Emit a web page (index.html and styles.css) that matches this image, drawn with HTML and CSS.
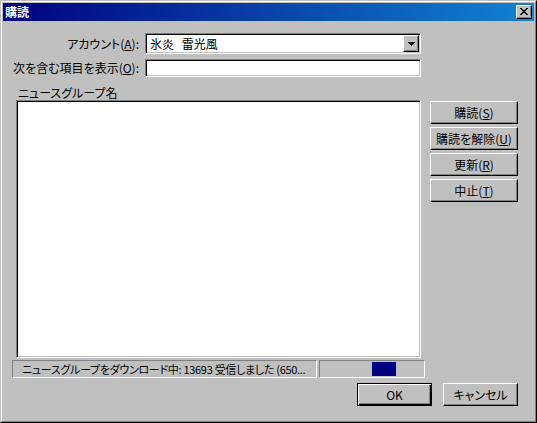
FILE: index.html
```html
<!DOCTYPE html>
<html lang="ja">
<head>
<meta charset="utf-8">
<title>購読</title>
<link rel="stylesheet" href="styles.css">
</head>
<body>
<div class="window">
  <div class="frame">
    <div class="titlebar">
      <span class="title">購読</span>
      <span class="close">
        <svg width="8" height="7" viewBox="0 0 8 7" shape-rendering="crispEdges">
          <path fill="#000" d="M0 0h2v1H0zM6 0h2v1H6zM1 1h2v1H1zM5 1h2v1H5zM2 2h4v1H2zM3 3h2v1H3zM2 4h4v1H2zM1 5h2v1H1zM5 5h2v1H5zM0 6h2v1H0zM6 6h2v1H6z"/>
        </svg>
      </span>
    </div>
    <div class="content">
      <div class="form">
        <span class="lbl">アカウント(<u>A</u>):</span>
        <div class="field combo">
          <span class="combo-text">氷炎 雷光風</span>
          <span class="drop">
            <svg width="7" height="4" viewBox="0 0 7 4" shape-rendering="crispEdges">
              <path fill="#000" d="M0 0h7v1H0zM1 1h5v1H1zM2 2h3v1H2zM3 3h1v1H3z"/>
            </svg>
          </span>
        </div>
        <span class="lbl">次を含む項目を表示(<u>O</u>):</span>
        <div class="field edit"></div>
      </div>
      <div class="list-label">ニュースグループ名</div>
      <div class="main">
        <div class="field listbox"></div>
        <div class="side">
          <button class="btn side-btn">購読(<u>S</u>)</button>
          <button class="btn side-btn">購読を解除(<u>U</u>)</button>
          <button class="btn side-btn">更新(<u>R</u>)</button>
          <button class="btn side-btn">中止(<u>T</u>)</button>
        </div>
      </div>
      <div class="status">
        <div class="panel p1">ニュースグループをダウンロード中: 13693 受信しました (650...</div>
        <div class="panel p2"><div class="bar"></div></div>
      </div>
      <div class="actions">
        <button class="btn default">OK</button>
        <button class="btn">キャンセル</button>
      </div>
    </div>
  </div>
</div>
</body>
</html>
```
FILE: styles.css
```css
html, body {
  margin: 0;
  padding: 0;
  background: #c0c0c0;
}
body {
  font-family: "Noto Sans CJK JP", "Noto Sans", sans-serif;
  font-size: 12px;
  line-height: 14px;
  color: #000;
  font-feature-settings: "palt";
}
.window {
  width: 537px;
  height: 423px;
  box-sizing: border-box;
  border: 1px solid;
  border-color: #c0c0c0 #000 #000 #c0c0c0;
  background: #c0c0c0;
}
.frame {
  height: 100%;
  box-sizing: border-box;
  border: 1px solid;
  border-color: #fff #808080 #808080 #fff;
  padding: 1px;
  display: flex;
  flex-direction: column;
}
.titlebar {
  height: 18px;
  flex: none;
  background: linear-gradient(to right, #000080, #1084d0);
  display: flex;
  align-items: center;
  justify-content: space-between;
  padding: 0 2px 0 2px;
  color: #fff;
  font-weight: bold;
}
.title {
  line-height: 14px;
}
.close {
  width: 16px;
  height: 14px;
  box-sizing: border-box;
  border: 1px solid;
  border-color: #fff #000 #000 #fff;
  box-shadow: inset -1px -1px #808080;
  background: #c0c0c0;
  display: flex;
  align-items: center;
  justify-content: center;
  padding: 0 1px 1px 0;
}
.close svg { display: block; }
.content {
  flex: 1;
}
.form {
  display: grid;
  grid-template-columns: 136px 276px;
  column-gap: 6px;
  row-gap: 5px;
  margin-top: 12px;
  align-items: center;
}
.lbl {
  text-align: right;
  white-space: nowrap;
}
.field {
  box-sizing: border-box;
  border: 1px solid;
  border-color: #808080 #fff #fff #808080;
  box-shadow: inset 1px 1px #000, inset -1px -1px #c0c0c0;
  background: #fff;
}
.combo {
  height: 21px;
  display: flex;
  align-items: center;
  justify-content: space-between;
  padding: 1px 1px 1px 4px;
}
.combo-text {
  white-space: pre;
  font-feature-settings: normal;
  word-spacing: 5px;
}
.drop {
  width: 16px;
  height: 17px;
  box-sizing: border-box;
  border: 1px solid;
  border-color: #fff #000 #000 #fff;
  box-shadow: inset -1px -1px #808080;
  background: #c0c0c0;
  display: flex;
  align-items: center;
  justify-content: center;
  padding-top: 1px;
}
.drop svg { display: block; }
.edit {
  height: 18px;
}
.list-label {
  margin-top: 9px;
  padding-left: 15px;
}
.main {
  display: flex;
  margin-left: 13px;
}
.listbox {
  width: 405px;
  height: 258px;
}
.side {
  margin-left: 9px;
  padding-top: 1px;
  display: flex;
  flex-direction: column;
  gap: 3px;
}
.btn {
  width: 75px;
  height: 23px;
  box-sizing: border-box;
  border: 1px solid;
  border-color: #fff #000 #000 #fff;
  box-shadow: inset -1px -1px #808080;
  background: #c0c0c0;
  font: inherit;
  color: #000;
  padding: 0;
  margin: 0;
  white-space: nowrap;
}
.side-btn {
  width: 88px;
}
.btn.default {
  border-color: #000;
  box-shadow: inset 1px 1px #fff, inset -1px -1px #000, inset -2px -2px #808080;
}
.status {
  display: flex;
  gap: 2px;
  margin-top: 2px;
  margin-left: 9px;
  height: 18px;
}
.panel {
  box-sizing: border-box;
  height: 18px;
  border: 1px solid;
  border-color: #808080 #fff #fff #808080;
}
.p1 {
  width: 305px;
  padding-left: 9px;
  font-size: 11px;
  line-height: 16px;
  white-space: nowrap;
  overflow: hidden;
  letter-spacing: -0.3px;
}
.p2 {
  width: 106px;
  padding: 1px;
}
.bar {
  margin-left: 51px;
  width: 24px;
  height: 14px;
  background: #000080;
}
.actions {
  display: flex;
  justify-content: flex-end;
  gap: 11px;
  margin-top: 5px;
  padding-right: 16px;
}
```
